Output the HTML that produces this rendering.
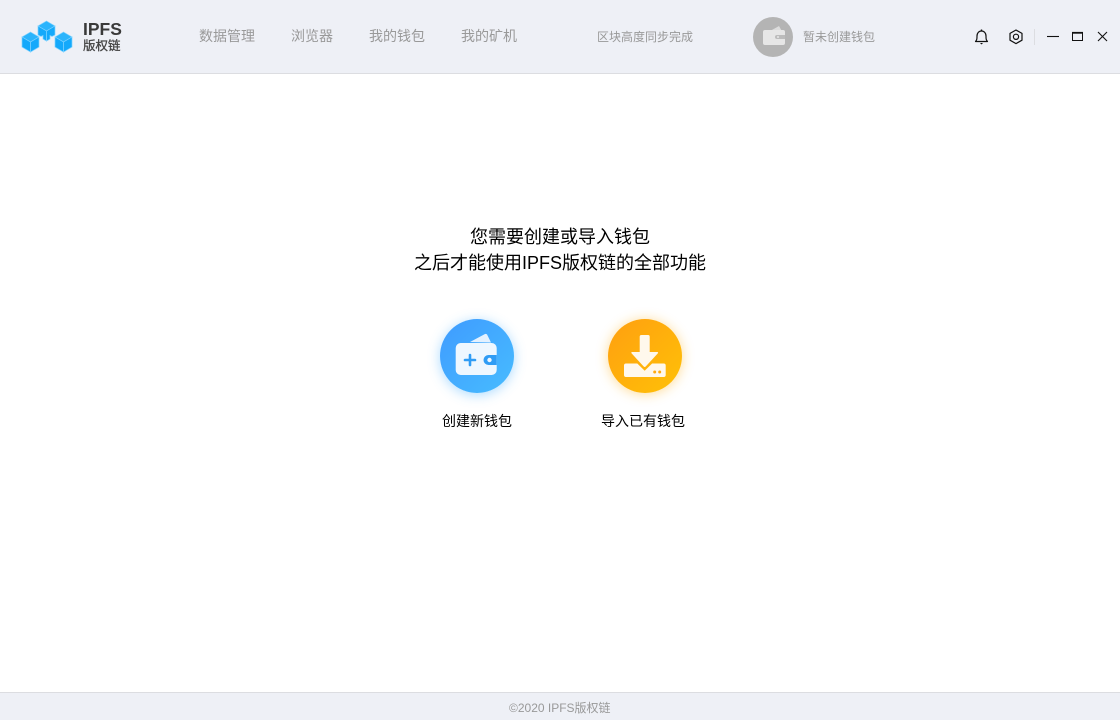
<!DOCTYPE html>
<html lang="zh">
<head>
<meta charset="utf-8">
<title>IPFS版权链</title>
<style>
html,body{margin:0;padding:0;width:1120px;height:720px;overflow:hidden;background:#fff;}
body{font-family:"Liberation Sans","Noto Sans CJK SC",sans-serif;position:relative;}
.t{position:absolute;white-space:nowrap;line-height:20px;}
#hdr{position:absolute;left:0;top:0;width:1120px;height:73px;background:#eef0f6;border-bottom:1px solid #dcdde1;}
#ftr{position:absolute;left:0;top:692px;width:1120px;height:28px;background:#eef0f6;border-top:1px solid #dcdde1;box-sizing:border-box;}
.nav{font-size:14px;color:#999;top:26px;}
svg{position:absolute;left:0;top:0;}
.c{position:absolute;border-radius:50%;width:74px;height:74px;top:319px;}
</style>
</head>
<body>
<div id="hdr"></div>
<div id="ftr"></div>

<div class="t" style="left:83px;top:19px;font-size:17.500px;font-weight:bold;color:#3a3a3a;">IPFS</div>
<div class="t" style="left:83px;top:36px;font-size:12.500px;color:#444;-webkit-text-stroke:0.300px #444;">版权链</div>

<div class="t nav" style="left:199px;">数据管理</div>
<div class="t nav" style="left:291px;">浏览器</div>
<div class="t nav" style="left:369px;">我的钱包</div>
<div class="t nav" style="left:461px;">我的矿机</div>
<div class="t" style="left:597px;top:27px;font-size:12px;color:#999;">区块高度同步完成</div>
<div class="t" style="left:803px;top:27px;font-size:12px;color:#999;">暂未创建钱包</div>

<div class="t" style="left:0;width:1120px;text-align:center;top:224px;font-size:18px;color:#000;line-height:26px;">您需要创建或导入钱包<br>之后才能使用IPFS版权链的全部功能</div>

<div class="c" style="left:439.500px;background:linear-gradient(135deg,#3f9bff,#47bcff);box-shadow:0 2px 12px rgba(70,175,255,.45);"></div>
<div class="c" style="left:608px;background:linear-gradient(135deg,#ff9f10,#ffc107);box-shadow:0 1px 12px rgba(255,176,20,.45);"></div>

<div class="t" style="left:442px;top:411px;font-size:14px;color:#000;">创建新钱包</div>
<div class="t" style="left:601px;top:411px;font-size:14px;color:#000;">导入已有钱包</div>

<div class="t" style="left:509px;top:698px;font-size:12px;line-height:20px;color:#999;">©2020 IPFS版权链</div>

<svg width="1120" height="720" viewBox="0 0 1120 720" fill="none">
  <!-- logo cubes -->
  <g stroke="#7fd2ff" stroke-width="0.700">
    <path d="M30.500 32 L39 37 L30.500 42 L22 37Z" fill="#2ab4fc"/>
    <path d="M22 37 L30.500 42 V52 L22 47Z" fill="#14a9fb"/>
    <path d="M39 37 L30.500 42 V52 L39 47Z" fill="#14a9fb"/>
    <path d="M63.500 32 L72 37 L63.500 42 L55 37Z" fill="#2ab4fc"/>
    <path d="M55 37 L63.500 42 V52 L55 47Z" fill="#14a9fb"/>
    <path d="M72 37 L63.500 42 V52 L72 47Z" fill="#14a9fb"/>
    <path d="M46.500 21 L55 26 L46.500 31 L38 26Z" fill="#2ab4fc"/>
    <path d="M38 26 L46.500 31 V41 L43 39 V35.500 L41 36.500 L38 35Z" fill="#14a9fb"/>
    <path d="M55 26 L46.500 31 V41 L50 39 V35.500 L52 36.500 L55 35Z" fill="#14a9fb"/>
  </g>

  <!-- avatar -->
  <circle cx="773" cy="37" r="20" fill="#b4b4b4"/>
  <path d="M771 30.500 L779 26 L781.500 30.500Z" fill="#dcdcdc"/>
  <rect x="763" y="30" width="22" height="15" rx="2" fill="#e6e6e6"/>
  <path d="M777 35 H785 V39 H777 A2 2 0 0 1 777 35Z" fill="#bcbcbc"/>
  <circle cx="778" cy="37" r="1" fill="#e6e6e6"/>

  <!-- bell -->
  <path d="M975.500 41.500 C977 40 977 38.500 977 36 C977 33 979 31 981.500 31 C984 31 986 33 986 36 C986 38.500 986 40 987.500 41.500Z" stroke="#111" stroke-width="1.200" stroke-linejoin="round"/>
  <path d="M981.500 29.500 V31" stroke="#111" stroke-width="1.400"/>
  <path d="M980 43 H983 L981.500 44.500Z" fill="#111"/>
  <!-- settings -->
  <path d="M1016 30 L1022 33.400 V40.200 L1016 43.600 L1010 40.200 V33.400Z" stroke="#111" stroke-width="1.200" stroke-linejoin="round"/>
  <circle cx="1016" cy="36.800" r="2.600" stroke="#111" stroke-width="1.200"/>
  <!-- divider -->
  <path d="M1034.500 29 V45" stroke="#dcdde1" stroke-width="1"/>
  <!-- window -->
  <path d="M1047 36.500 H1059" stroke="#111" stroke-width="1.100"/>
  <rect x="1072.500" y="32.500" width="10" height="8" stroke="#111" stroke-width="1"/>
  <path d="M1072 32.800 H1083" stroke="#111" stroke-width="1.800"/>
  <path d="M1098 32 L1107 41 M1107 32 L1098 41" stroke="#111" stroke-width="1.100"/>

  <!-- wallet icon -->
  <path d="M470 342 L485 334 Q486.500 333.500 487.200 334.800 L491 342.500Z" fill="#e3f1ff"/>
  <rect x="455.700" y="343" width="41" height="32" rx="5" fill="#eef7ff"/>
  <path d="M465 360 H475 M470 355 V365" stroke="#2f9cf5" stroke-width="2.600" stroke-linecap="round"/>
  <path d="M488.500 355 H496.700 V365 H488.500 A5 5 0 0 1 488.500 355Z" fill="#2f9cf5"/>
  <circle cx="489.500" cy="360" r="2.200" fill="#eef7ff"/>

  <!-- download icon -->
  <path d="M641.500 335 H648 Q649.700 335 649.700 336.700 V352 H657 Q658.800 352 657.700 353.500 L645.700 366.500 Q644.700 367.500 643.700 366.500 L631.700 353.500 Q630.600 352 632.400 352 H639.700 V336.700 Q639.700 335 641.500 335Z" fill="#fff8ec"/>
  <path d="M626 363.500 H637.300 L644.700 370.800 L652.100 363.500 H663.700 Q665.700 363.500 665.700 365.500 V375 Q665.700 377 663.700 377 H626 Q624 377 624 375 V365.500 Q624 363.500 626 363.500Z" fill="#fff8ec"/>
  <circle cx="654.700" cy="372" r="1.500" fill="#ffa90f"/>
  <circle cx="659.700" cy="372" r="1.500" fill="#ffa90f"/>
</svg>
</body>
</html>
